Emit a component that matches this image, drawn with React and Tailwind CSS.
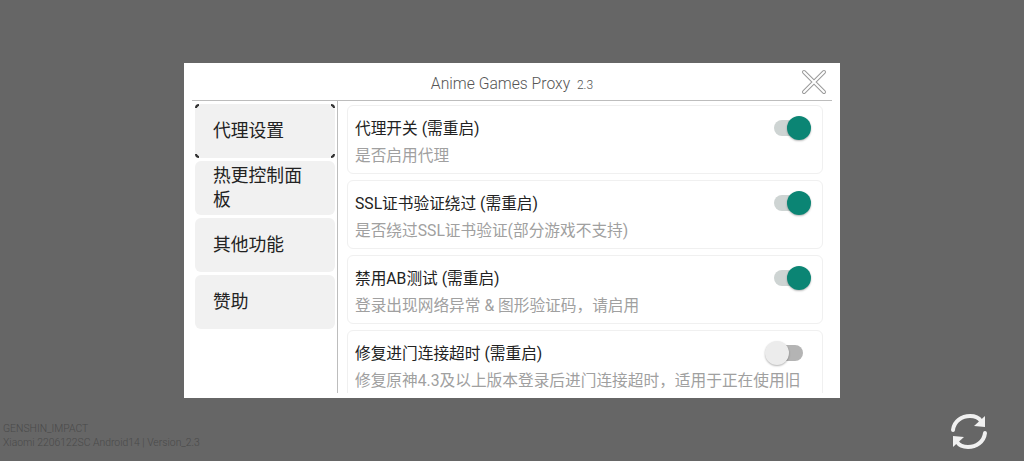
import React from 'react';

const FONT = "font-['Roboto','Noto_Sans_CJK_SC',sans-serif]";

const settings = [
  { title: '代理开关 (需重启)', desc: '是否启用代理', on: true },
  { title: 'SSL证书验证绕过 (需重启)', desc: '是否绕过SSL证书验证(部分游戏不支持)', on: true },
  { title: '禁用AB测试 (需重启)', desc: '登录出现网络异常 & 图形验证码，请启用', on: true },
  { title: '修复进门连接超时 (需重启)', desc: '修复原神4.3及以上版本登录后进门连接超时，适用于正在使用旧', on: false },
];

const menu = ['代理设置', '热更控制面板', '其他功能', '赞助'];

const Toggle = ({ on }) => (
  <div className="relative w-[46px] h-[24px] shrink-0">
    <div className={`absolute top-[4px] h-[16px] w-[30px] rounded-full ${on ? 'left-[9px] bg-[#ced4d3]' : 'left-[8px] bg-[#b4b4b4]'}`} />
    <div
      className={`absolute top-0 size-[24px] rounded-full shadow-[0_1px_2px_rgba(0,0,0,0.3)] ${on ? 'right-0 bg-[#0b8574]' : 'left-0 bg-[#ececec]'}`}
    />
  </div>
);

const SettingCard = ({ title, desc, on }) => (
  <div className="relative h-[69px] shrink-0 rounded-md border border-[#f0f0f0] bg-white pl-[7px] pr-[11px] pt-[10px]">
    <div className="flex items-center justify-between h-[24px]">
      <span className="mt-[2px] text-[15.7px] text-[#222222] whitespace-nowrap">{title}</span>
      <Toggle on={on} />
    </div>
    <div className="mt-[4px] text-[15.7px] leading-[24px] text-[#a0a0a0] whitespace-nowrap">{desc}</div>
  </div>
);

// the black corner ticks on the selected menu item
const Corners = () => (
  <>
    <span className="absolute left-0 top-0 size-[4px] border-l-2 border-t-2 border-[#333333] rounded-tl-md" />
    <span className="absolute right-0 top-0 size-[4px] border-r-2 border-t-2 border-[#333333] rounded-tr-md" />
    <span className="absolute left-0 bottom-0 size-[4px] border-l-2 border-b-2 border-[#333333] rounded-bl-md" />
    <span className="absolute right-0 bottom-0 size-[4px] border-r-2 border-b-2 border-[#333333] rounded-br-md" />
  </>
);

const MenuItem = ({ label, active }) => (
  <div className="relative h-[54px] shrink-0 flex items-center rounded-md bg-[#f1f1f1] pl-[18px] pr-[22px] text-[17.8px] leading-[24px] text-[#222222]">
    {label}
    {active && <Corners />}
  </div>
);

const CloseIcon = () => (
  <svg width="26" height="26" viewBox="0 0 26 26" fill="none" strokeLinecap="round">
    <path d="M3 3 L23 23 M23 3 L3 23" stroke="#9a9a9a" strokeWidth="4" />
    <path d="M3 3 L23 23 M23 3 L3 23" stroke="#ffffff" strokeWidth="2" />
  </svg>
);

const RefreshIcon = () => (
  <svg width="38" height="38" viewBox="0 0 38 38" fill="none">
    <path d="M3 17 C4 8 12 3 20 3 C25 3 29 5 31 8" stroke="#f0f0f0" strokeWidth="4" strokeLinecap="round" />
    <path d="M35 3 L35 14 L24 13 Z" fill="#f0f0f0" />
    <path d="M35 20 C34 29 26 34 18 34 C13 34 9 32 7 29" stroke="#f0f0f0" strokeWidth="4" strokeLinecap="round" />
    <path d="M3 34 L3 23 L14 24 Z" fill="#f0f0f0" />
  </svg>
);

export default function App() {
  return (
    <div className={`relative h-screen w-full bg-[#666666] flex items-center justify-center overflow-hidden ${FONT}`}>
      {/* Dialog */}
      <div className="w-[656px] h-[335px] bg-white flex flex-col px-[8px] pb-[5px]">
        <div className="relative h-[38px] shrink-0 flex items-center justify-center border-b border-[#bdbdbd]">
          <span className="mt-[4px] text-[15.7px] font-light text-[#555555] whitespace-nowrap">
            Anime Games Proxy <span className="text-[12px] ml-[3px]">2.3</span>
          </span>
          <div className="absolute right-[5px] top-[6px]">
            <CloseIcon />
          </div>
        </div>

        <div className="flex flex-1 min-h-0">
          <div className="w-[146px] shrink-0 border-r border-[#bdbdbd] pl-[3px] pr-[2px] pt-[3px] flex flex-col gap-[3px]">
            {menu.map((label, i) => (
              <MenuItem key={label} label={label} active={i === 0} />
            ))}
          </div>
          <div className="flex-1 min-w-0 overflow-hidden pl-[9px] pr-[9px] pt-[4px] flex flex-col gap-[6px]">
            {settings.map((item) => (
              <SettingCard key={item.title} {...item} />
            ))}
          </div>
        </div>
      </div>

      {/* Footer info */}
      <div className="absolute left-[3px] bottom-[11px] text-[10.4px] leading-[14px] text-[#4a4a4a] font-light whitespace-nowrap">
        <div>GENSHIN_IMPACT</div>
        <div>Xiaomi 2206122SC Android14 | Version_2.3</div>
      </div>

      <div className="absolute left-[950px] top-[413px]">
        <RefreshIcon />
      </div>
    </div>
  );
}
